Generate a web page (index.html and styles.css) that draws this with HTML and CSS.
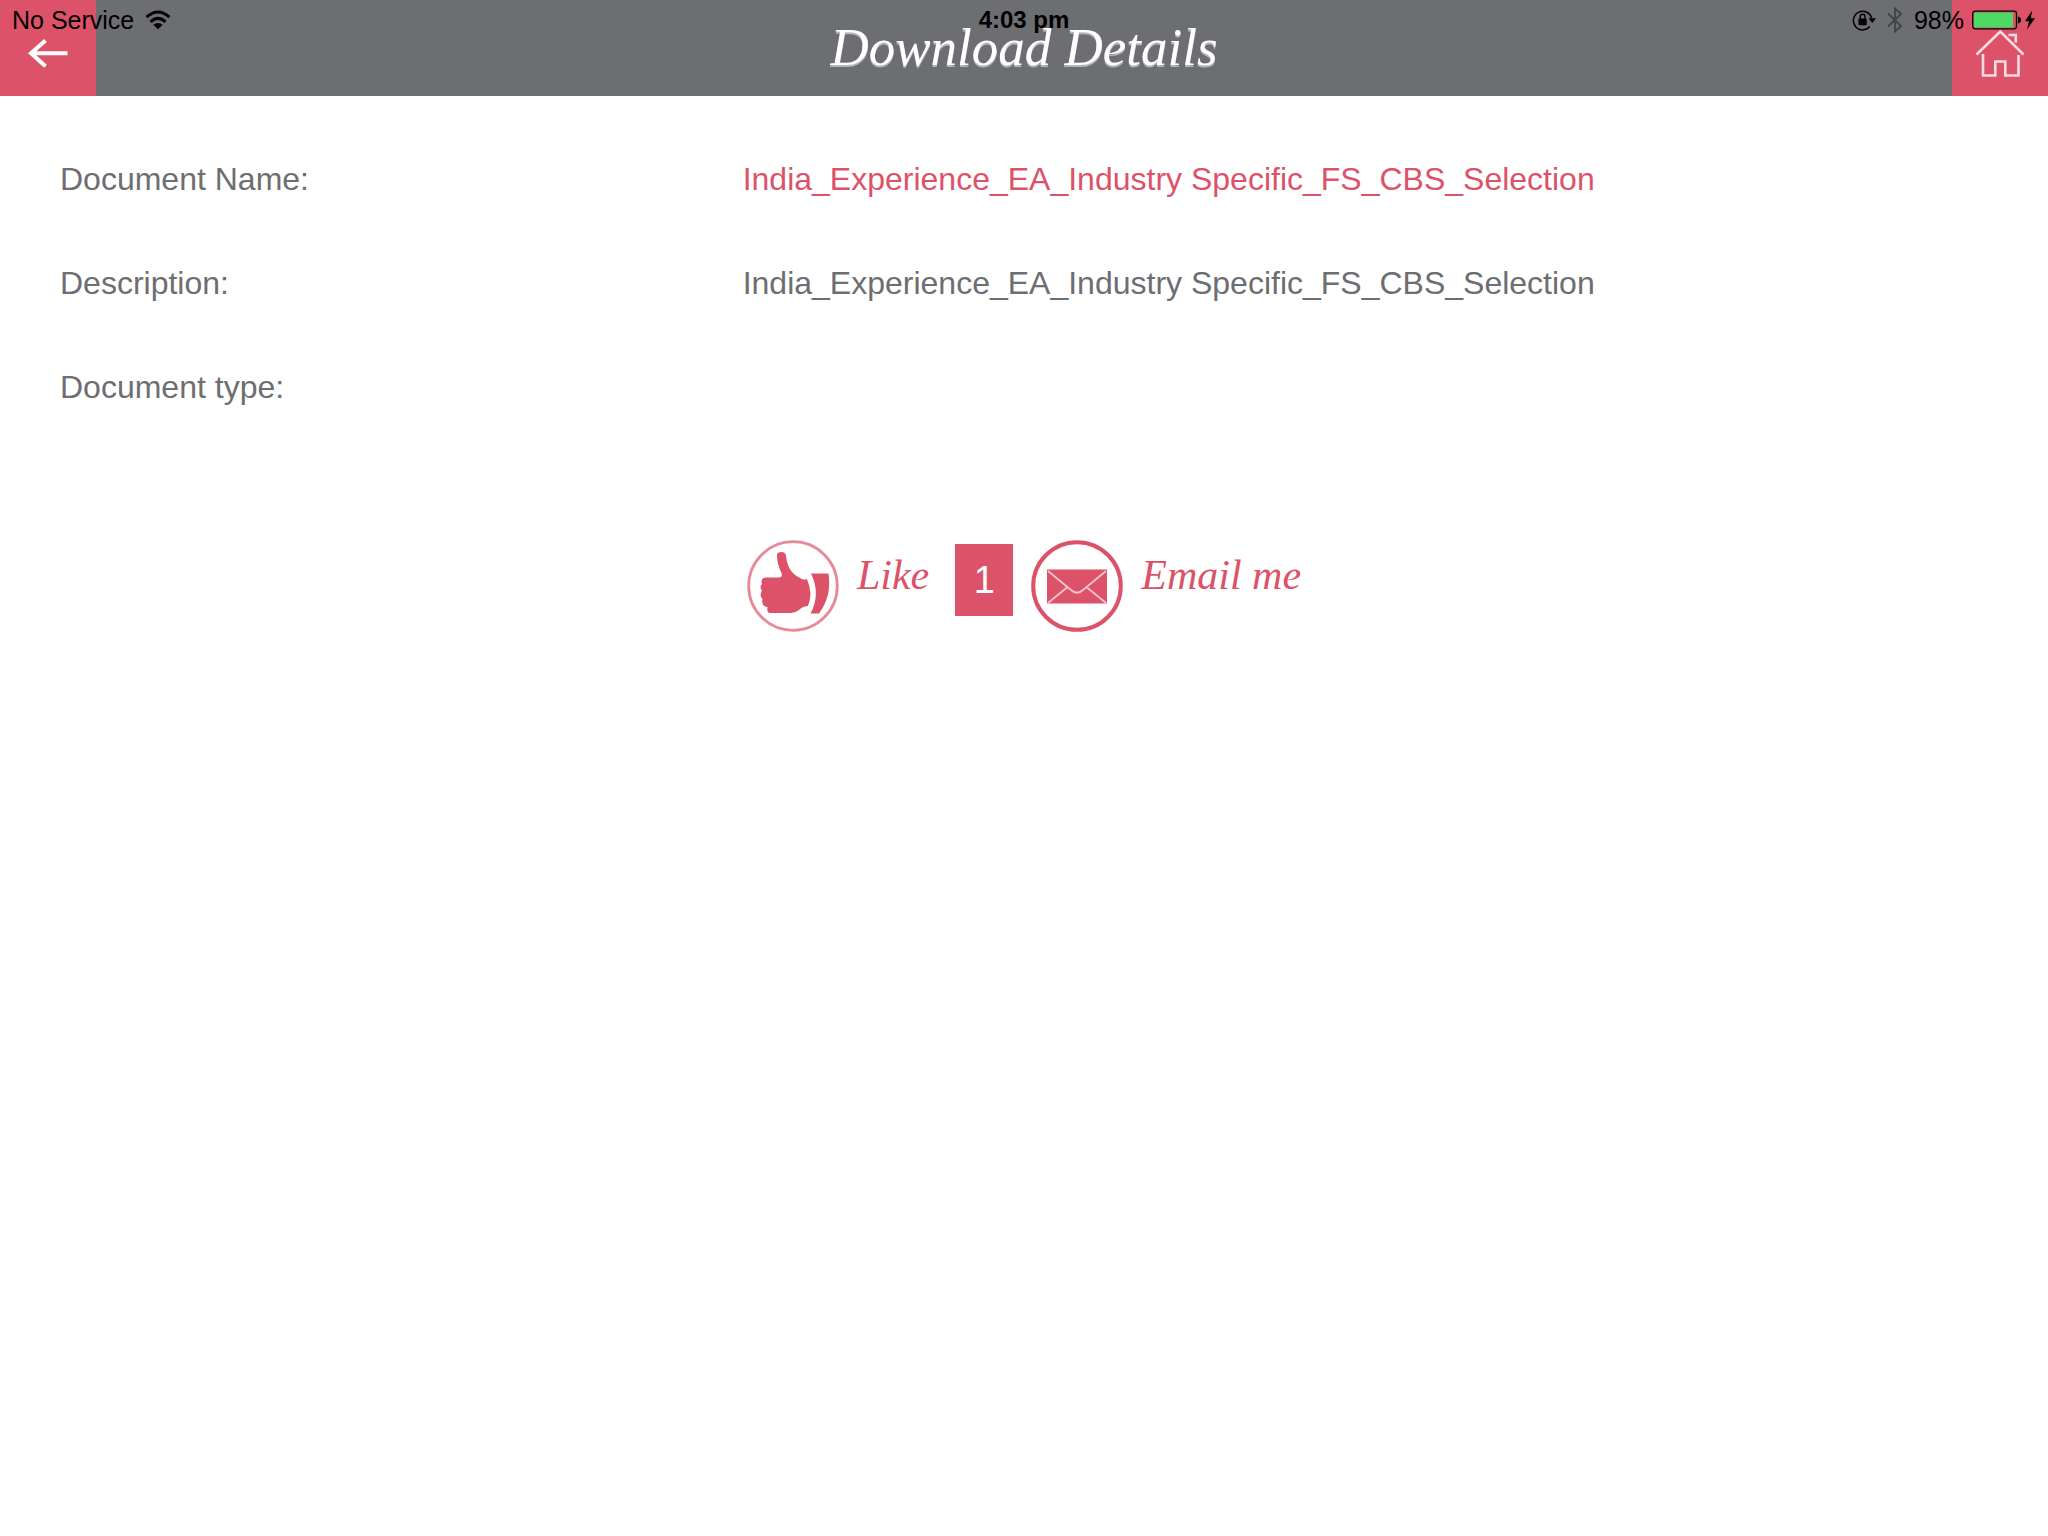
FILE: index.html
```html
<!DOCTYPE html>
<html lang="en">
<head>
<meta charset="utf-8">
<meta name="viewport" content="width=device-width, initial-scale=1">
<title>Download Details</title>
<link rel="stylesheet" href="styles.css">
</head>
<body>
<div class="status">
  <div class="status-left">
    <span>No Service</span>
    <svg width="26" height="20" viewBox="0 0 26 20" aria-hidden="true">
      <path d="M1.500 7.200Q13-3.200 24.500 7.200M5.500 11.800Q13 5 20.500 11.800" fill="none" stroke="#000" stroke-width="3"/>
      <path d="M8.300 14.800Q13 11 17.700 14.800L13 19.200Z"/>
    </svg>
  </div>
  <time class="status-time">4:03 pm</time>
  <div class="status-right">
    <svg width="24" height="22" viewBox="0 0 24 22" aria-hidden="true">
      <path d="M17.800 17.600A9.300 9.300 0 1 1 19.600 9" fill="none" stroke="#000" stroke-width="1.500"/>
      <path d="M16.500 9.300H24L20.300 14Z"/>
      <rect x="6.500" y="9.500" width="8.200" height="6.700" rx="1"/>
      <path d="M8.200 10V7.600a2.400 2.400 0 0 1 4.800 0V10" fill="none" stroke="#000" stroke-width="1.400"/>
    </svg>
    <svg width="16" height="28" viewBox="0 0 16 28" aria-hidden="true">
      <path d="M1 7.500L14 20 8 25.500V2.500L14 8 1 20.500" fill="none" stroke="#424346" stroke-width="1.900"/>
    </svg>
    <span>98%</span>
    <svg class="battery" width="50" height="20" viewBox="0 0 50 20" aria-hidden="true">
      <rect x=".7" y="1.200" width="43.800" height="17.600" rx="2.500" fill="none" stroke="#000" stroke-width="1.300"/>
      <rect x="2" y="2.500" width="39" height="15" rx="1" fill="#4cd964"/>
      <path d="M46 6.500q3 1 3 3.500t-3 3.500z"/>
    </svg>
    <svg width="12" height="20" viewBox="0 0 12 20" aria-hidden="true">
      <path d="M8.200.5L1 11.200H5L3 19.500 11 8.200H6.800Z"/>
    </svg>
  </div>
</div>
<header class="bar">
  <button class="nav" type="button" aria-label="Back">
    <svg width="96" height="96" viewBox="0 0 96 96" aria-hidden="true">
      <path d="M67.500 53.300H31M45.500 40.500L31 53.300 45.500 66.300" fill="none" stroke="#fff" stroke-width="4"/>
    </svg>
  </button>
  <h1 class="title">Download Details</h1>
  <button class="nav" type="button" aria-label="Home">
    <svg width="96" height="96" viewBox="0 0 96 96" aria-hidden="true">
      <path d="M24.500 54.500L48.300 31.500 71.500 54.500M31 54V75.500H43.300V61.500H53.300V75.500H66.500V55M56.500 35H63.800V42.500" fill="none" stroke="#fbdce2" stroke-width="2.600"/>
    </svg>
  </button>
</header>
<main>
  <dl class="details">
    <div class="row"><dt>Document Name:</dt><dd class="accent">India_Experience_EA_Industry Specific_FS_CBS_Selection</dd></div>
    <div class="row"><dt>Description:</dt><dd>India_Experience_EA_Industry Specific_FS_CBS_Selection</dd></div>
    <div class="row"><dt>Document type:</dt><dd></dd></div>
  </dl>
  <div class="actions">
    <button class="action" type="button">
      <svg width="92" height="92" viewBox="0 0 92 92" aria-hidden="true">
        <circle cx="46" cy="46" r="44.300" fill="none" stroke="#e58a99" stroke-width="2.800"/>
        <path d="M30 15Q30 12 34.500 12Q38.500 12 39 16C40 27 45 34 53 38Q57 40.500 60 39Q63 46 63.500 54Q63 61 61 66Q56 66 52 70Q48 73 44 73H23Q19.500 73 20.500 67Q14 66 15.500 59Q12 56 15 50.500Q12 47 15 44Q13 38 19 37.500H32Q36 37.500 34.500 33Q30 24 30 15Z" fill="#dc5369"/>
        <path d="M64 33.500H81.500Q85 56 72 73.500H63.500Q74 54 64 33.500Z" fill="#dc5369"/>
      </svg>
      <span>Like</span>
    </button>
    <span class="count">1</span>
    <button class="action" type="button">
      <svg width="92" height="92" viewBox="0 0 92 92" aria-hidden="true">
        <circle cx="46" cy="46" r="43.800" fill="none" stroke="#dc5369" stroke-width="4"/>
        <rect x="16" y="29.500" width="60" height="34" fill="#dc5369"/>
        <path d="M17 31L40 50Q46 55.500 52 50L75 31M17 63L36 47.500M75 63L56 47.500" fill="none" stroke="#f6c3cc" stroke-width="1.800"/>
      </svg>
      <span>Email me</span>
    </button>
  </div>
</main>
</body>
</html>
```
FILE: styles.css
```css
* {
  box-sizing: border-box;
}

body {
  margin: 0;
  background: #fff;
  color: #6d6e71;
  font-family: "Liberation Sans", Arial, sans-serif;
  font-size: 32px;
}

button {
  margin: 0;
  padding: 0;
  border: 0;
  background: none;
  color: inherit;
  font: inherit;
  cursor: pointer;
}

svg {
  display: block;
  flex: none;
}

/* System status, laid over the app bar */
.status {
  position: absolute;
  top: 0;
  left: 0;
  right: 0;
  height: 40px;
  padding: 0 12px;
  display: grid;
  grid-template-columns: 1fr auto 1fr;
  align-items: center;
  color: #000;
  font-size: 25px;
  line-height: 40px;
  pointer-events: none;
}

.status-left,
.status-right {
  display: flex;
  align-items: center;
  gap: 11px;
}

.status-right {
  justify-content: flex-end;
}

.status-time {
  font-size: 24px;
  font-weight: 700;
}

.battery {
  margin: 0 -9px 0 -3px;
}

.bar {
  display: flex;
  justify-content: space-between;
  height: 96px;
  background: #6d6e71;
}

.nav {
  width: 96px;
  background: #dc5369;
}

.title {
  margin: 0;
  color: #fff;
  font-family: "Liberation Serif", "Times New Roman", serif;
  font-size: 53px;
  font-style: italic;
  font-weight: 400;
  line-height: 94px;
  text-shadow: 0 2px 0 #b4b5b7;
}

.details {
  margin: 0;
  padding-top: 31px;
}

.row {
  display: grid;
  grid-template-columns: 1fr 2fr;
  min-height: 104px;
  align-items: center;
}

.row dt,
.row dd {
  margin: 0;
  padding-left: 60px;
}

.accent {
  color: #dc5369;
}

.actions {
  display: flex;
  justify-content: center;
  align-items: flex-start;
  gap: 18px;
  margin-top: 101px;
}

.action {
  display: flex;
  align-items: flex-start;
  gap: 18px;
  color: #dc5369;
  font-family: "Liberation Serif", "Times New Roman", serif;
  font-size: 42px;
  font-style: italic;
  line-height: 70px;
}

.count {
  width: 58px;
  margin: 4px 0 0 8px;
  background: #dc5369;
  color: #fff;
  font-size: 38px;
  line-height: 72px;
  text-align: center;
}
```
